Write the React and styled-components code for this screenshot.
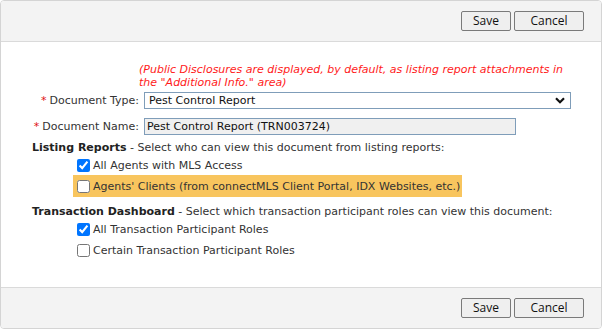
import React from 'react';
import styled, { createGlobalStyle } from 'styled-components';

const GlobalStyle = createGlobalStyle`
  html, body {
    margin: 0;
    padding: 0;
    background: #ffffff;
  }
  body {
    font-family: "DejaVu Sans", Verdana, sans-serif;
    font-size: 11px;
    color: #333;
  }
`;

const Panel = styled.div`
  width: 600px;
  height: 327px;
  border: 1px solid #d4d4d4;
  border-radius: 4px;
  display: flex;
  flex-direction: column;
  overflow: hidden;
`;

const Bar = styled.div`
  height: 40px;
  background: #f3f3f3;
  display: flex;
  align-items: center;
  justify-content: flex-end;
  gap: 3px;
  padding-right: 17px;
  border-top: ${p => (p.$bottom ? '1px solid #dadada' : 'none')};
  border-bottom: ${p => (p.$bottom ? 'none' : '1px solid #dadada')};
  margin-top: ${p => (p.$bottom ? 'auto' : '0')};
`;

const Button = styled.button`
  height: 20px;
  width: ${p => p.$w}px;
  padding: 0;
  border: 1px solid #7a7a7a;
  border-radius: 2px;
  background: #efefef;
  font-family: "Open Sans", "Noto Sans", sans-serif;
  font-size: 12px;
  color: #111;
  line-height: 18px;
`;

const Body = styled.div`
  padding: 21px 0 0 0;
`;

const Note = styled.div`
  margin-left: 138px;
  color: #ff1a1a;
  font-style: italic;
  line-height: 13px;
  width: 460px;
`;

const FieldRow = styled.div`
  display: grid;
  grid-template-columns: 138px auto;
  column-gap: 5px;
  align-items: center;
  margin-top: ${p => p.$mt}px;
`;

const Label = styled.label`
  text-align: right;
  color: #333;
`;

const Star = styled.span`
  color: #e01010;
  margin-right: 3px;
`;

const SelectWrap = styled.div`
  position: relative;
  width: 427px;
`;

const Select = styled.select`
  appearance: none;
  width: 100%;
  height: 17px;
  border: 1px solid #7f9db9;
  background: #fff;
  font-family: "DejaVu Sans", Verdana, sans-serif;
  font-size: 11px;
  color: #111;
  padding: 0 0 0 4px;
  margin: 0;
  outline: none;
`;

const Chevron = styled.svg`
  position: absolute;
  right: 6px;
  top: 5px;
  pointer-events: none;
`;

const TextInput = styled.input`
  width: 372px;
  height: 17px;
  box-sizing: border-box;
  border: 1px solid #7f9db9;
  background: #f0f0f0;
  font-family: "DejaVu Sans", Verdana, sans-serif;
  font-size: 11px;
  color: #111;
  padding: 0 0 0 2px;
  margin: 0;
  outline: none;
`;

const SectionTitle = styled.div`
  margin: ${p => p.$mt}px 0 0 31px;
  line-height: 14px;
  color: #333;
  b {
    color: #222;
  }
`;

const CheckRow = styled.label`
  display: flex;
  align-items: center;
  height: ${p => p.$h || 21}px;
  width: fit-content;
  margin-left: 72px;
  padding: 0 2px 0 4px;
  background: ${p => (p.$hl ? '#f8c55e' : 'transparent')};
  color: #333;

  input {
    width: 13px;
    height: 13px;
    margin: 0 3px 0 0;
  }
`;

function Toolbar({ bottom }) {
  return (
    <Bar $bottom={bottom}>
      <Button $w={50}>Save</Button>
      <Button $w={70}>Cancel</Button>
    </Bar>
  );
}

export default function App() {
  return (
    <>
      <GlobalStyle />
      <Panel>
        <Toolbar />
        <Body>
          <Note>
            (Public Disclosures are displayed, by default, as listing report attachments in
            <br />
            the "Additional Info." area)
          </Note>
          <FieldRow $mt={3}>
            <Label><Star>*</Star>Document Type:</Label>
            <SelectWrap>
              <Select defaultValue="pcr">
                <option value="pcr">Pest Control Report</option>
              </Select>
              <Chevron width="10" height="7" viewBox="0 0 10 7">
                <path d="M1 1.2 L5 5.2 L9 1.2" fill="none" stroke="#111" strokeWidth="2.2" />
              </Chevron>
            </SelectWrap>
          </FieldRow>
          <FieldRow $mt={9}>
            <Label><Star>*</Star>Document Name:</Label>
            <TextInput readOnly value="Pest Control Report (TRN003724)" />
          </FieldRow>
          <SectionTitle $mt={6}>
            <b>Listing Reports</b> - Select who can view this document from listing reports:
          </SectionTitle>
          <CheckRow $h={20}>
            <input type="checkbox" defaultChecked />
            All Agents with MLS Access
          </CheckRow>
          <CheckRow $hl $h={22}>
            <input type="checkbox" />
            Agents' Clients (from connectMLS Client Portal, IDX Websites, etc.)
          </CheckRow>
          <SectionTitle $mt={8}>
            <b>Transaction Dashboard</b> - Select which transaction participant roles can view this document:
          </SectionTitle>
          <CheckRow>
            <input type="checkbox" defaultChecked />
            All Transaction Participant Roles
          </CheckRow>
          <CheckRow>
            <input type="checkbox" />
            Certain Transaction Participant Roles
          </CheckRow>
        </Body>
        <Toolbar bottom />
      </Panel>
    </>
  );
}
